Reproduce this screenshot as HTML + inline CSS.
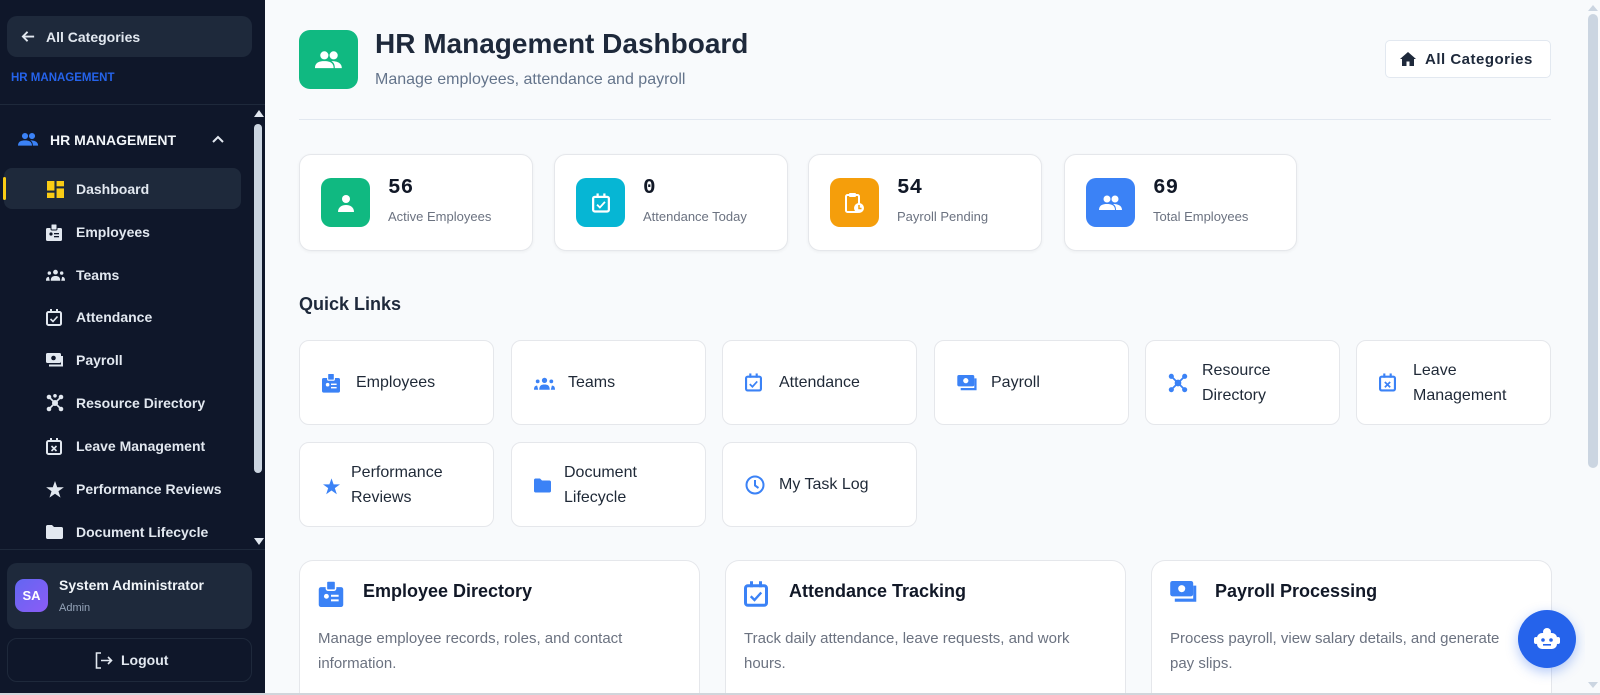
<!DOCTYPE html>
<html><head><meta charset="utf-8">
<style>
*{box-sizing:border-box;margin:0;padding:0}
html{width:1600px;height:695px;overflow:hidden}
body{width:1600px;height:695px;overflow:hidden;font-family:"Liberation Sans",sans-serif;background:#f8fafc;position:relative}
.a{position:absolute}
#sb{left:0;top:0;width:265px;height:693px;background:#0f172a}
.nav{position:absolute;left:0;width:240px;height:40px;display:flex;align-items:center;color:#e2e8f0;font-size:14px;font-weight:bold}
.nav svg{position:absolute;left:46px}
.nav span{position:absolute;left:76px}
.card{position:absolute;background:#fff;border:1px solid #e5e7eb;border-radius:12px;box-shadow:0 1px 3px rgba(0,0,0,.05)}
.ic{position:absolute;width:49px;height:49px;border-radius:10px;left:21px;top:23px;display:flex;align-items:center;justify-content:center}
.num{position:absolute;left:88px;top:22px;font-family:"Liberation Mono",monospace;font-weight:bold;font-size:21px;color:#111827}
.lab{position:absolute;left:88px;top:54px;font-size:13px;color:#6b7280}
.ql{position:absolute;background:#fff;border:1px solid #e5e7eb;border-radius:10px;width:195px;height:85px}
.ql svg{position:absolute;left:22px;top:32px}
.ql span{position:absolute;left:56px;top:0;height:100%;display:flex;align-items:center;font-size:16px;color:#1f2937;line-height:25px}
.big{position:absolute;background:#fff;border:1px solid #e5e7eb;border-bottom:none;border-radius:14px 14px 0 0;width:401px;height:133px;top:560px}
.big h3{position:absolute;left:63px;top:20px;font-size:18px;color:#111827}
.big svg{position:absolute;left:18px;top:20px}
.big p{position:absolute;left:18px;top:65px;right:22px;font-size:15px;line-height:25px;color:#6b7280}
</style></head><body>
<div id="sb" class="a">
 <div class="a" style="left:7px;top:16px;width:245px;height:41px;background:#1e293b;border-radius:10px;color:#e2e8f0;font-size:14px;font-weight:bold">
  <svg class="a" style="left:14px;top:13px" width="15" height="15" viewBox="0 0 16 16"><path d="M14 8H2M7 3L2 8l5 5" stroke="#e2e8f0" stroke-width="2" fill="none"/></svg>
  <span class="a" style="left:39px;top:13px">All Categories</span></div>
 <div class="a" style="left:11px;top:72px;color:#2563eb;font-size:11.5px;font-weight:bold">HR MANAGEMENT</div>
 <div class="a" style="left:0;top:104px;width:265px;height:1px;background:#1e293b"></div>
 <div class="a" style="left:254px;top:110px;width:0;height:0;border-left:5px solid transparent;border-right:5px solid transparent;border-bottom:7px solid #e2e8f0"></div>
 <div class="a" style="left:254px;top:124px;width:8px;height:349px;background:#cbd5e1;border-radius:4px"></div>
 <div class="a" style="left:254px;top:538px;width:0;height:0;border-left:5px solid transparent;border-right:5px solid transparent;border-top:7px solid #e2e8f0"></div>
 <svg class="a" style="left:18px;top:132px" width="21" height="15" viewBox="0 0 24 16"><circle cx="8" cy="4" r="3.5" fill="#3b82f6"/><circle cx="16" cy="4" r="3.5" fill="#3b82f6"/><path d="M0 15c0-5 4-6 8-6s8 1 8 6zM14 9c4 0 9 1 9 6h-6c0-3-1-5-3-6z" fill="#3b82f6"/></svg>
 <div class="a" style="left:50px;top:132px;color:#f1f5f9;font-size:14px;font-weight:bold">HR MANAGEMENT</div>
 <svg class="a" style="left:212px;top:135px" width="12" height="8" viewBox="0 0 12 8"><path d="M1 7l5-5 5 5" stroke="#e2e8f0" stroke-width="2" fill="none"/></svg>
 <div class="a" style="left:4px;top:168px;width:237px;height:41px;background:#1e293b;border-radius:8px"></div>
 <div class="a" style="left:3px;top:177px;width:3px;height:23px;background:#facc15;border-radius:2px"></div>
 <div class="nav" style="top:169px"><svg width="17" height="17" viewBox="0 0 16 16" style="left:47px"><rect x="0" y="0" width="7" height="9" fill="#facc15"/><rect x="9" y="0" width="7" height="5" fill="#facc15"/><rect x="0" y="11" width="7" height="5" fill="#facc15"/><rect x="9" y="7" width="7" height="9" fill="#facc15"/></svg><span>Dashboard</span></div>
 <div class="nav" style="top:212px"><svg width="16" height="17" viewBox="0 0 16 17"><rect x="0" y="4" width="16" height="13" rx="1.5" fill="#e2e8f0"/><rect x="5" y="0" width="6" height="6" rx="1" fill="#e2e8f0" stroke="#0f172a"/><circle cx="5" cy="10" r="1.6" fill="#0f172a"/><rect x="8" y="9" width="5" height="1.3" fill="#0f172a"/><rect x="8" y="12" width="5" height="1.3" fill="#0f172a"/></svg><span>Employees</span></div>
 <div class="nav" style="top:255px"><svg width="19" height="12" viewBox="0 0 20 12"><circle cx="10" cy="3" r="2.5" fill="#e2e8f0"/><circle cx="3.5" cy="4" r="1.8" fill="#e2e8f0"/><circle cx="16.5" cy="4" r="1.8" fill="#e2e8f0"/><path d="M5 12c0-4 2-5 5-5s5 1 5 5zM0 12c0-3 1-4 3-4l1 4zM20 12c0-3-1-4-3-4l-1 4z" fill="#e2e8f0"/></svg><span>Teams</span></div>
 <div class="nav" style="top:297px"><svg width="16" height="17" viewBox="0 0 16 17"><rect x="1" y="3" width="14" height="13" rx="1.5" fill="none" stroke="#e2e8f0" stroke-width="2"/><rect x="4" y="0" width="2" height="4" fill="#e2e8f0"/><rect x="10" y="0" width="2" height="4" fill="#e2e8f0"/><path d="M4.5 10l2.5 2.5 4.5-5" stroke="#e2e8f0" stroke-width="1.6" fill="none"/></svg><span>Attendance</span></div>
 <div class="nav" style="top:340px"><svg width="18" height="15" viewBox="0 0 18 15"><rect x="0" y="0" width="15" height="10" rx="1.5" fill="#e2e8f0"/><circle cx="7.5" cy="5" r="2.3" fill="#0f172a"/><path d="M3 12.5h13V3" stroke="#e2e8f0" stroke-width="2" fill="none"/></svg><span>Payroll</span></div>
 <div class="nav" style="top:383px"><svg width="18" height="18" viewBox="0 0 18 18"><circle cx="9" cy="9" r="3" fill="#e2e8f0"/><circle cx="3" cy="3" r="2.3" fill="#e2e8f0"/><circle cx="15" cy="3" r="2.3" fill="#e2e8f0"/><circle cx="3" cy="15" r="2.3" fill="#e2e8f0"/><circle cx="15" cy="15" r="2.3" fill="#e2e8f0"/><circle cx="9" cy="1.8" r="1.8" fill="#e2e8f0"/><path d="M3 3l12 12M15 3L3 15" stroke="#e2e8f0" stroke-width="1.6"/></svg><span>Resource Directory</span></div>
 <div class="nav" style="top:426px"><svg width="16" height="17" viewBox="0 0 16 17"><rect x="1" y="3" width="14" height="13" rx="1.5" fill="none" stroke="#e2e8f0" stroke-width="2"/><rect x="4" y="0" width="2" height="4" fill="#e2e8f0"/><rect x="10" y="0" width="2" height="4" fill="#e2e8f0"/><path d="M5.5 8l5 5M10.5 8l-5 5" stroke="#e2e8f0" stroke-width="1.6"/></svg><span>Leave Management</span></div>
 <div class="nav" style="top:469px"><svg width="18" height="17" viewBox="0 0 24 23"><path d="M12 0l3 8.5h9l-7.3 5.3 2.8 8.7L12 17.2 4.5 22.5l2.8-8.7L0 8.5h9z" fill="#e2e8f0"/></svg><span>Performance Reviews</span></div>
 <div class="nav" style="top:512px"><svg width="17" height="14" viewBox="0 0 17 14"><path d="M0 1.5C0 .7.7 0 1.5 0H6l2 2h7.5c.8 0 1.5.7 1.5 1.5v9c0 .8-.7 1.5-1.5 1.5h-14C.7 14 0 13.3 0 12.5z" fill="#e2e8f0"/></svg><span>Document Lifecycle</span></div>
 <div class="a" style="left:0;top:549px;width:265px;height:1px;background:#1e293b"></div>
 <div class="a" style="left:7px;top:563px;width:245px;height:66px;background:#1e293b;border-radius:10px">
  <div class="a" style="left:8px;top:16px;width:33px;height:33px;border-radius:9px;background:linear-gradient(135deg,#6366f1,#8b5cf6);color:#fff;font-size:13px;font-weight:bold;display:flex;align-items:center;justify-content:center">SA</div>
  <div class="a" style="left:52px;top:14px;color:#f1f5f9;font-size:14px;font-weight:bold">System Administrator</div>
  <div class="a" style="left:52px;top:39px;color:#94a3b8;font-size:11px">Admin</div>
 </div>
 <div class="a" style="left:7px;top:638px;width:245px;height:44px;border:1px solid #1e293b;border-radius:10px">
  <svg class="a" style="left:87px;top:13px" width="18" height="17" viewBox="0 0 18 17"><path d="M6 1H1.5v15H6" stroke="#e2e8f0" stroke-width="1.6" fill="none"/><path d="M6 8.5h10M13 5l3.5 3.5L13 12" stroke="#e2e8f0" stroke-width="1.6" fill="none"/></svg>
  <span class="a" style="left:113px;top:13px;color:#e2e8f0;font-size:14px;font-weight:bold">Logout</span></div>
</div>

<div class="a" style="left:299px;top:30px;width:59px;height:59px;background:#10b981;border-radius:11px;display:flex;align-items:center;justify-content:center">
 <svg width="28" height="20" viewBox="0 0 24 16"><circle cx="8" cy="4" r="3.5" fill="#fff"/><circle cx="16" cy="4" r="3.5" fill="#fff"/><path d="M0 15c0-5 4-6 8-6s8 1 8 6zM14 9c4 0 9 1 9 6h-6c0-3-1-5-3-6z" fill="#fff"/></svg></div>
<div class="a" style="left:375px;top:28px;font-size:28px;font-weight:bold;color:#1e293b">HR Management Dashboard</div>
<div class="a" style="left:375px;top:71px;font-size:16px;color:#64748b">Manage employees, attendance and payroll</div>
<div class="a" style="left:1385px;top:40px;width:166px;height:38px;background:#fff;border:1px solid #e2e8f0;border-radius:5px">
 <svg class="a" style="left:14px;top:11px" width="16" height="14" viewBox="0 0 16 14"><path d="M8 0L0 7h2v7h4.5V9.5h3V14H14V7h2z" fill="#1e293b"/></svg>
 <span class="a" style="left:39px;top:10px;font-size:15px;font-weight:bold;color:#1e293b;letter-spacing:.5px">All Categories</span></div>
<div class="a" style="left:299px;top:119px;width:1252px;height:1px;background:#e2e8f0"></div>

<div class="card" style="left:299px;top:154px;width:234px;height:97px"><div class="ic" style="background:#10b981"><svg width="18" height="18" viewBox="0 0 18 18"><circle cx="9" cy="5" r="4" fill="#fff"/><path d="M1 18c0-5 4-7 8-7s8 2 8 7z" fill="#fff"/></svg></div><div class="num">56</div><div class="lab">Active Employees</div></div>
<div class="card" style="left:554px;top:154px;width:234px;height:97px"><div class="ic" style="background:#06b6d4"><svg width="18" height="20" viewBox="0 0 16 17"><rect x="1" y="3" width="14" height="13" rx="1.5" fill="none" stroke="#fff" stroke-width="2"/><rect x="4" y="0" width="2" height="4" fill="#fff"/><rect x="10" y="0" width="2" height="4" fill="#fff"/><path d="M4.5 10l2.5 2.5 4.5-5" stroke="#fff" stroke-width="1.6" fill="none"/></svg></div><div class="num">0</div><div class="lab">Attendance Today</div></div>
<div class="card" style="left:808px;top:154px;width:234px;height:97px"><div class="ic" style="background:#f59e0b"><svg width="20" height="22" viewBox="0 0 20 22"><rect x="1" y="3" width="13" height="17" rx="1.5" fill="none" stroke="#fff" stroke-width="2"/><rect x="4" y="1" width="7" height="4" rx="1" fill="#fff"/><circle cx="14" cy="16" r="5" fill="#fff"/><path d="M14 13v3.5h2.5" stroke="#f59e0b" stroke-width="1.5" fill="none"/></svg></div><div class="num">54</div><div class="lab">Payroll Pending</div></div>
<div class="card" style="left:1064px;top:154px;width:233px;height:97px"><div class="ic" style="background:#3b82f6"><svg width="24" height="16" viewBox="0 0 24 16"><circle cx="8" cy="4" r="3.5" fill="#fff"/><circle cx="16" cy="4" r="3.5" fill="#fff"/><path d="M0 15c0-5 4-6 8-6s8 1 8 6zM14 9c4 0 9 1 9 6h-6c0-3-1-5-3-6z" fill="#fff"/></svg></div><div class="num">69</div><div class="lab">Total Employees</div></div>

<div class="a" style="left:299px;top:294px;font-size:18px;font-weight:bold;color:#1e293b">Quick Links</div>

<div class="ql" style="left:299px;top:340px"><svg width="18" height="20" viewBox="0 0 16 17"><rect x="0" y="4" width="16" height="13" rx="1.5" fill="#3b82f6"/><rect x="5" y="0" width="6" height="6" rx="1" fill="#3b82f6" stroke="#fff"/><circle cx="5" cy="10" r="1.6" fill="#fff"/><rect x="8" y="9" width="5" height="1.3" fill="#fff"/><rect x="8" y="12" width="5" height="1.3" fill="#fff"/></svg><span>Employees</span></div>
<div class="ql" style="left:511px;top:340px"><svg width="21" height="13" viewBox="0 0 20 12" style="top:36px"><circle cx="10" cy="3" r="2.5" fill="#3b82f6"/><circle cx="3.5" cy="4" r="1.8" fill="#3b82f6"/><circle cx="16.5" cy="4" r="1.8" fill="#3b82f6"/><path d="M5 12c0-4 2-5 5-5s5 1 5 5zM0 12c0-3 1-4 3-4l1 4zM20 12c0-3-1-4-3-4l-1 4z" fill="#3b82f6"/></svg><span>Teams</span></div>
<div class="ql" style="left:722px;top:340px"><svg width="17" height="19" viewBox="0 0 16 17"><rect x="1" y="3" width="14" height="13" rx="1.5" fill="none" stroke="#3b82f6" stroke-width="2"/><rect x="4" y="0" width="2" height="4" fill="#3b82f6"/><rect x="10" y="0" width="2" height="4" fill="#3b82f6"/><path d="M4.5 10l2.5 2.5 4.5-5" stroke="#3b82f6" stroke-width="1.6" fill="none"/></svg><span>Attendance</span></div>
<div class="ql" style="left:934px;top:340px"><svg width="21" height="17" viewBox="0 0 18 15" style="top:34px"><rect x="0" y="0" width="15" height="10" rx="1.5" fill="#3b82f6"/><circle cx="7.5" cy="5" r="2.3" fill="#fff"/><path d="M3 12.5h13V3" stroke="#3b82f6" stroke-width="2" fill="none"/></svg><span>Payroll</span></div>
<div class="ql" style="left:1145px;top:340px"><svg width="20" height="20" viewBox="0 0 18 18"><circle cx="9" cy="9" r="3" fill="#3b82f6"/><circle cx="3" cy="3" r="2.3" fill="#3b82f6"/><circle cx="15" cy="3" r="2.3" fill="#3b82f6"/><circle cx="3" cy="15" r="2.3" fill="#3b82f6"/><circle cx="15" cy="15" r="2.3" fill="#3b82f6"/><path d="M3 3l12 12M15 3L3 15" stroke="#3b82f6" stroke-width="1.6"/></svg><span>Resource<br>Directory</span></div>
<div class="ql" style="left:1356px;top:340px"><svg width="17" height="19" viewBox="0 0 16 17"><rect x="1" y="3" width="14" height="13" rx="1.5" fill="none" stroke="#3b82f6" stroke-width="2"/><rect x="4" y="0" width="2" height="4" fill="#3b82f6"/><rect x="10" y="0" width="2" height="4" fill="#3b82f6"/><path d="M5.5 8l5 5M10.5 8l-5 5" stroke="#3b82f6" stroke-width="1.6"/></svg><span>Leave<br>Management</span></div>
<div class="ql" style="left:299px;top:442px"><svg width="17" height="17" viewBox="0 0 24 23" style="left:23px;top:35px"><path d="M12 0l3 8.5h9l-7.3 5.3 2.8 8.7L12 17.2 4.5 22.5l2.8-8.7L0 8.5h9z" fill="#3b82f6"/></svg><span style="left:51px">Performance<br>Reviews</span></div>
<div class="ql" style="left:511px;top:442px"><svg width="17" height="15" viewBox="0 0 17 14" style="top:35px"><path d="M0 1.5C0 .7.7 0 1.5 0H6l2 2h7.5c.8 0 1.5.7 1.5 1.5v9c0 .8-.7 1.5-1.5 1.5h-14C.7 14 0 13.3 0 12.5z" fill="#3b82f6"/></svg><span style="left:52px">Document<br>Lifecycle</span></div>
<div class="ql" style="left:722px;top:442px"><svg width="20" height="20" viewBox="0 0 20 20" style="top:32px"><circle cx="10" cy="10" r="8.5" fill="none" stroke="#3b82f6" stroke-width="2"/><path d="M10 5v5.5l3.5 2.5" stroke="#3b82f6" stroke-width="2" fill="none"/></svg><span>My Task Log</span></div>

<div class="big" style="left:299px"><svg width="26" height="26" viewBox="0 0 16 17"><rect x="0" y="4" width="16" height="13" rx="1.5" fill="#3b82f6"/><rect x="5" y="0" width="6" height="6" rx="1" fill="#3b82f6" stroke="#fff"/><circle cx="5" cy="10" r="1.6" fill="#fff"/><rect x="8" y="9" width="5" height="1.3" fill="#fff"/><rect x="8" y="12" width="5" height="1.3" fill="#fff"/></svg><h3>Employee Directory</h3><p>Manage employee records, roles, and contact information.</p></div>
<div class="big" style="left:725px"><svg width="24" height="26" viewBox="0 0 16 17"><rect x="1" y="3" width="14" height="13" rx="1.5" fill="none" stroke="#3b82f6" stroke-width="2"/><rect x="4" y="0" width="2" height="4" fill="#3b82f6"/><rect x="10" y="0" width="2" height="4" fill="#3b82f6"/><path d="M4.5 10l2.5 2.5 4.5-5" stroke="#3b82f6" stroke-width="1.6" fill="none"/></svg><h3>Attendance Tracking</h3><p>Track daily attendance, leave requests, and work hours.</p></div>
<div class="big" style="left:1151px"><svg width="28" height="23" viewBox="0 0 18 15"><rect x="0" y="0" width="15" height="10" rx="1.5" fill="#3b82f6"/><circle cx="7.5" cy="5" r="2.3" fill="#fff"/><path d="M3 12.5h13V3" stroke="#3b82f6" stroke-width="2" fill="none"/></svg><h3>Payroll Processing</h3><p>Process payroll, view salary details, and generate<br>pay slips.</p></div>

<div class="a" style="left:1518px;top:610px;width:58px;height:58px;border-radius:50%;background:#2563eb;box-shadow:0 4px 12px rgba(37,99,235,.35);display:flex;align-items:center;justify-content:center">
 <svg width="28" height="24" viewBox="0 0 28 24"><circle cx="14" cy="5" r="4" fill="#fff"/><rect x="4" y="6" width="20" height="16" rx="5" fill="#fff"/><rect x="1" y="10" width="4" height="7" rx="2" fill="#fff"/><rect x="23" y="10" width="4" height="7" rx="2" fill="#fff"/><circle cx="10" cy="13" r="1.8" fill="#2563eb"/><circle cx="18" cy="13" r="1.8" fill="#2563eb"/><rect x="10" y="17" width="8" height="1.6" fill="#2563eb"/></svg></div>

<div class="a" style="left:1585px;top:0;width:15px;height:693px;background:#f8fafc"></div>
<div class="a" style="left:1588px;top:5px;width:0;height:0;border-left:5px solid transparent;border-right:5px solid transparent;border-bottom:6px solid #cbd5e1"></div>
<div class="a" style="left:1588px;top:14px;width:10px;height:454px;background:#cbd5e1;border-radius:5px"></div>
<div class="a" style="left:1588px;top:682px;width:0;height:0;border-left:5px solid transparent;border-right:5px solid transparent;border-top:6px solid #cbd5e1"></div>
<div class="a" style="left:0;top:693px;width:1600px;height:2px;background:#d1d5db"></div>
</body></html>
